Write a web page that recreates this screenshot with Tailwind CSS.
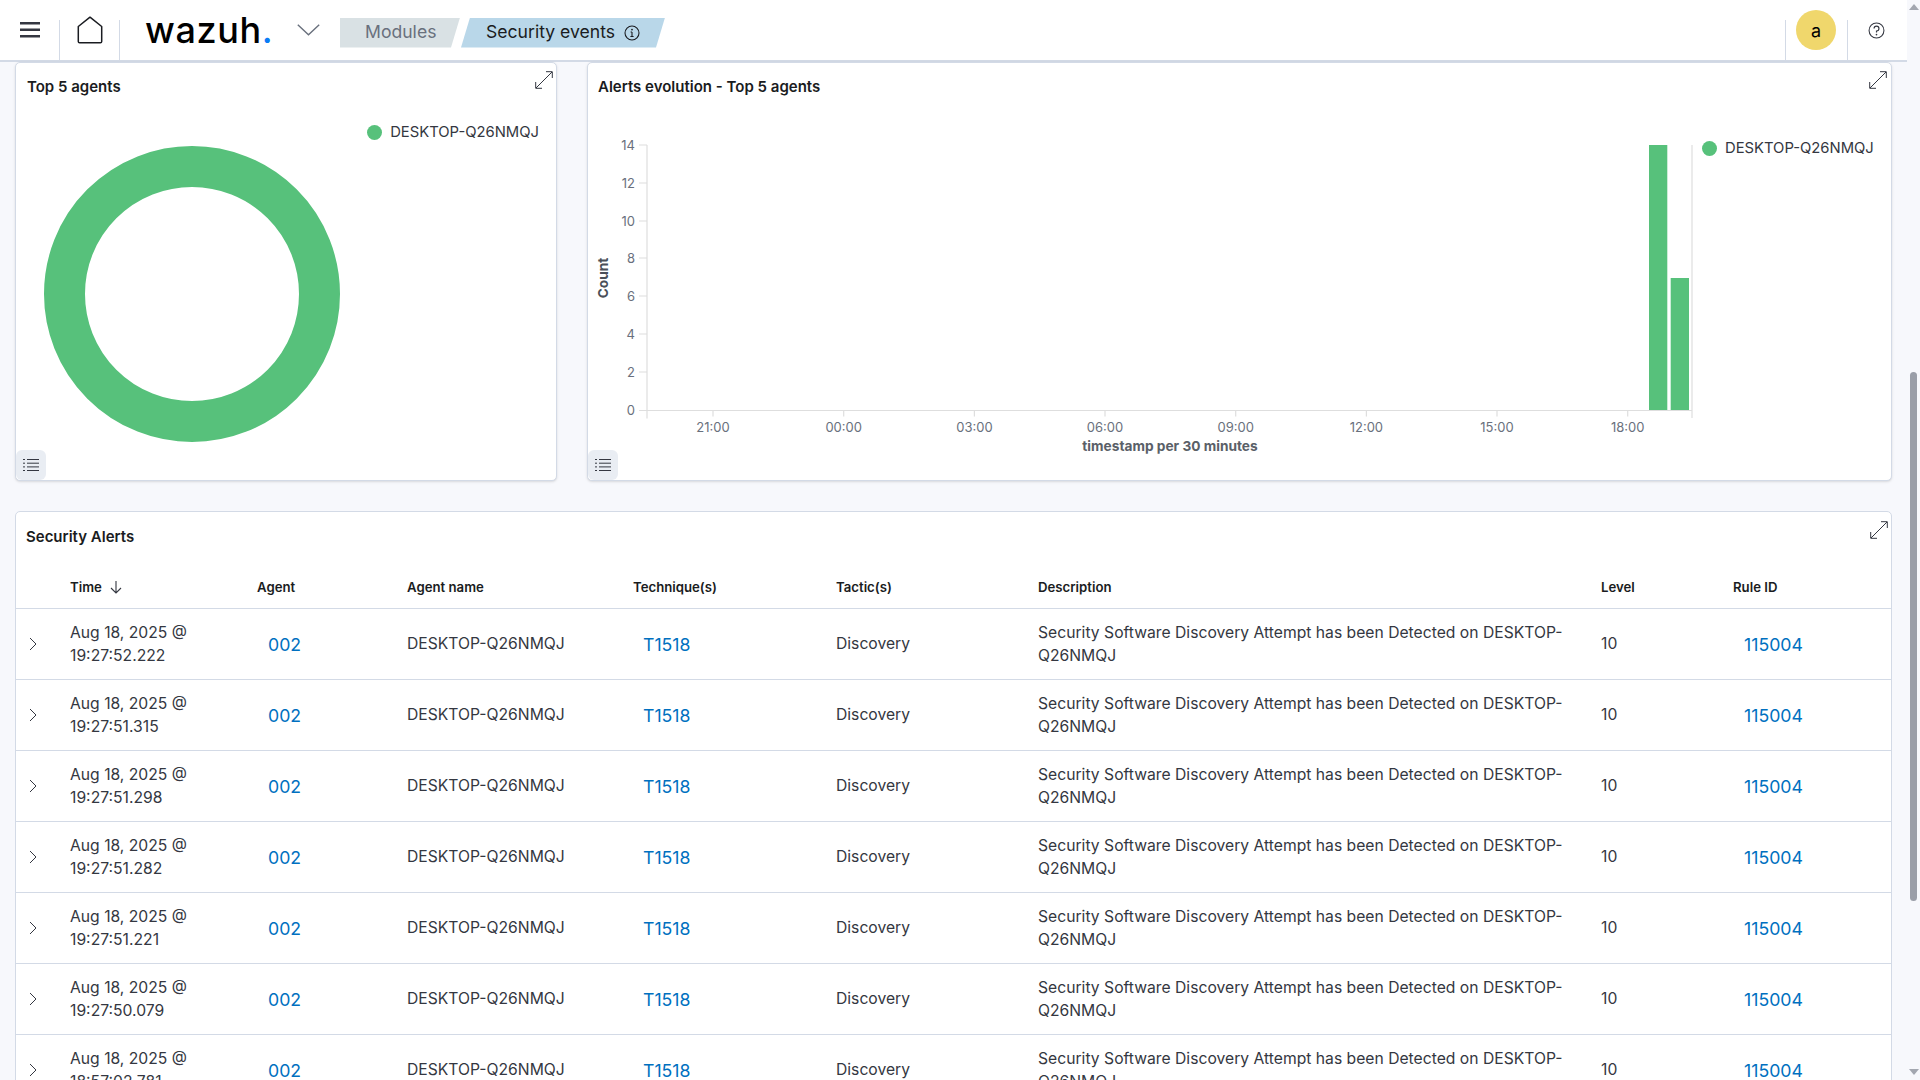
<!DOCTYPE html>
<html lang="en">
<head>
    <meta charset="UTF-8">
    <title>Wazuh - Security events</title>
    <script src="https://cdn.jsdelivr.net/npm/@tailwindcss/browser@4"></script>
</head>
<body class="flex h-screen overflow-hidden bg-[#f7f8fc] font-[Inter,sans-serif] text-[#343741]">
    <div class="w-[1907px] shrink-0">
        <!-- Header -->
        <header class="flex h-[62px] items-center border-b-2 border-[#d3dae6] bg-white">
            <div class="flex w-[59px] justify-center pl-[1px]">
                <svg width="20" height="16" viewBox="0 0 20 16"><path d="M0 1.2h20M0 7.7h20M0 14.2h20" stroke="#343741" stroke-width="2.4"/></svg>
            </div>
            <div class="h-10 w-px self-end bg-[#d3dae6]"></div>
            <div class="flex w-[59px] justify-center">
                <svg width="26" height="28" viewBox="0 0 26 28" fill="none"><path d="M13 1.2 24.7 10.5V25.4a1.3 1.3 0 0 1-1.3 1.3H2.6a1.3 1.3 0 0 1-1.3-1.3V10.5Z" stroke="#1a1c21" stroke-width="1.5" stroke-linejoin="round"/></svg>
            </div>
            <div class="h-10 w-px self-end bg-[#d3dae6]"></div>
            <div class="ml-[25px] w-[126px] text-[36px] leading-none font-medium tracking-[0.6px] text-black">wazuh<span class="text-[#0a7cf5]">.</span></div>
            <svg class="ml-[26px]" width="23" height="12" viewBox="0 0 23 12" fill="none"><path d="M.8.8 11.5 10.8 22.2.8" stroke="#69707d" stroke-width="1.4"/></svg>
            <div class="ml-[20px] mt-[5px] flex h-[30px] items-center">
                <div class="flex h-full w-[120px] items-center bg-[#d9e1e4] pl-[25px] text-[17.6px] text-[#69707d] [clip-path:polygon(0_0,100%_0,calc(100%-9px)_100%,0_100%)]">Modules</div>
                <div class="ml-px flex h-full w-[204px] items-center gap-[9px] bg-[#b9d7e9] pl-[25px] text-[17.6px] text-[#1a1c21] [clip-path:polygon(9px_0,100%_0,calc(100%-9px)_100%,0_100%)]">
                    Security events
                    <svg width="16" height="16" viewBox="0 0 16 16" fill="none"><circle cx="8" cy="8" r="7" stroke="#1a1c21" stroke-width="1.1"/><path d="M8 7v4.5M6.4 11.5h3.2M6.6 7H8" stroke="#1a1c21" stroke-width="1.1"/><circle cx="8" cy="4.6" r=".9" fill="#1a1c21"/></svg>
                </div>
            </div>
            <div class="ml-auto h-10 w-px self-end bg-[#d3dae6]"></div>
            <div class="flex w-[61px] justify-center pr-px">
                <div class="flex h-10 w-10 items-center justify-center rounded-full bg-[#f0d76c] text-[18px] text-black">a</div>
            </div>
            <div class="h-10 w-px self-end bg-[#d3dae6]"></div>
            <div class="flex w-[59px] justify-center pr-[2px]">
                <svg width="17" height="17" viewBox="0 0 16 16" fill="none"><circle cx="8" cy="8" r="7" stroke="#343741" stroke-width="1"/><path d="M5.7 6.2A2.3 2.3 0 1 1 8 8.5v1.4" stroke="#343741" stroke-width="1.1"/><circle cx="8" cy="11.8" r=".8" fill="#343741"/></svg>
            </div>
        </header>

        <main class="pl-[15px] pr-[15px]">
            <div class="grid grid-cols-[542px_1305px] gap-x-[30px]">
                <!-- Top 5 agents -->
                <section class="relative h-[419px] rounded-[5px] border border-[#d3dae6] bg-white shadow-sm">
                    <h2 class="pl-[11px] pt-[14px] text-[15px] leading-5 font-semibold text-[#1a1c21]">Top 5 agents</h2>
                    <div class="mt-[25px] flex items-center justify-end gap-[8px] pr-[17px] text-[14.8px] leading-5">
                        <span class="h-[15px] w-[15px] rounded-full bg-[#57c17b]"></span>DESKTOP-Q26NMQJ
                    </div>
                    <svg class="ml-[28px] mt-[4px]" width="296" height="296" viewBox="0 0 296 296" fill="none"><circle cx="148" cy="148" r="127.5" stroke="#57c17b" stroke-width="41"/></svg>
                    <button class="absolute left-0 bottom-0 flex h-[30px] w-[30px] items-center justify-center rounded-md bg-[#e9edf3]">
                        <svg width="16" height="14" viewBox="0 0 16 14" fill="none" stroke="#343741"><path d="M0 1.5h2M4 1.5h12M0 5.2h2M4 5.2h12M0 8.9h2M4 8.9h12M0 12.5h2M4 12.5h12"/></svg>
                    </button>
                    <svg class="absolute right-[3px] top-[8px]" width="18" height="18" viewBox="0 0 18 18" fill="none" stroke="#343741"><path d="M1 17 17 1M11 .7h6.3V7M.7 11v6.3H7"/></svg>
                </section>

                <!-- Alerts evolution -->
                <section class="relative h-[419px] rounded-[5px] border border-[#d3dae6] bg-white shadow-sm">
                    <h2 class="pl-[10px] pt-[14px] text-[15px] leading-5 font-semibold text-[#1a1c21]">Alerts evolution - Top 5 agents</h2>
                    <div class="mt-[3px] flex">
                        <svg width="1113" height="360" viewBox="588 100 1113 360" fill="none" font-size="13">
                            <path d="M647 145V410.5M639 145h8M639 183h8M639 221h8M639 258h8M639 296h8M639 334h8M639 372h8M639 410.5h8M647 410.5H1692M647 410.5v8M713 410.5v6M843.7 410.5v6M974.4 410.5v6M1105 410.5v6M1235.7 410.5v6M1366.4 410.5v6M1497 410.5v6M1627.7 410.5v6M1692 145V418" stroke="#dedede" stroke-width="1.2"/>
                            <rect x="1649" y="145" width="18.3" height="265" fill="#57c17b"/>
                            <rect x="1670.7" y="278" width="18.3" height="132" fill="#57c17b"/>
                            <g fill="#69707d" text-anchor="end">
                                <text x="635" y="149.5">14</text><text x="635" y="187.5">12</text><text x="635" y="225.5">10</text><text x="635" y="262.5">8</text><text x="635" y="300.5">6</text><text x="635" y="338.5">4</text><text x="635" y="376.5">2</text><text x="635" y="414.5">0</text>
                            </g>
                            <g fill="#69707d" text-anchor="middle">
                                <text x="713" y="432">21:00</text><text x="843.7" y="432">00:00</text><text x="974.4" y="432">03:00</text><text x="1105" y="432">06:00</text><text x="1235.7" y="432">09:00</text><text x="1366.4" y="432">12:00</text><text x="1497" y="432">15:00</text><text x="1627.7" y="432">18:00</text>
                            </g>
                            <text x="1170" y="451" fill="#5a6068" font-size="13.7" font-weight="700" text-anchor="middle">timestamp per 30 minutes</text>
                            <text transform="translate(608 278) rotate(-90)" fill="#4a4f58" font-size="13.7" font-weight="700" text-anchor="middle">Count</text>
                        </svg>
                        <div class="mt-[38px] flex h-5 items-center gap-[8px] pl-px text-[14.8px]">
                            <span class="h-[15px] w-[15px] rounded-full bg-[#57c17b]"></span>DESKTOP-Q26NMQJ
                        </div>
                    </div>
                    <button class="absolute left-0 bottom-0 flex h-[30px] w-[30px] items-center justify-center rounded-md bg-[#e9edf3]">
                        <svg width="16" height="14" viewBox="0 0 16 14" fill="none" stroke="#343741"><path d="M0 1.5h2M4 1.5h12M0 5.2h2M4 5.2h12M0 8.9h2M4 8.9h12M0 12.5h2M4 12.5h12"/></svg>
                    </button>
                    <svg class="absolute right-[4px] top-[8px]" width="18" height="18" viewBox="0 0 18 18" fill="none" stroke="#343741"><path d="M1 17 17 1M11 .7h6.3V7M.7 11v6.3H7"/></svg>
                </section>
            </div>

            <!-- Security Alerts -->
            <section class="relative mt-[30px] rounded-t-[5px] border border-[#d3dae6] bg-white">
                <h2 class="pl-[10px] pt-[15px] text-[15px] leading-5 font-semibold text-[#1a1c21]">Security Alerts</h2>
                <svg class="absolute right-[3px] top-[9px]" width="18" height="18" viewBox="0 0 18 18" fill="none" stroke="#343741"><path d="M1 17 17 1M11 .7h6.3V7M.7 11v6.3H7"/></svg>

                <div class="mt-[30px] grid h-[31px] grid-cols-[54px_187px_150px_226px_203px_202px_563px_132px_1fr] items-start text-[13.2px] leading-5 font-semibold text-[#1a1c21]">
                    <div></div>
                    <div class="flex items-center gap-[7px]">Time
                        <svg width="14" height="14" viewBox="0 0 14 14" fill="none" stroke="#343741" stroke-width="1.1"><path d="M7 1v12M2 8l5 5 5-5"/></svg>
                    </div>
                    <div>Agent</div>
                    <div>Agent name</div>
                    <div>Technique(s)</div>
                    <div>Tactic(s)</div>
                    <div>Description</div>
                    <div>Level</div>
                    <div>Rule ID</div>
                </div>

                <div class="grid h-[71px] grid-cols-[54px_187px_150px_226px_203px_202px_563px_132px_1fr] items-center border-t border-[#d3dae6] text-[15.7px] leading-[23px]">
                    <svg class="ml-[13px]" width="8" height="14" viewBox="0 0 8 14" fill="none" stroke="#343741"><path d="m1 1 6 6-6 6"/></svg>
                    <div>Aug 18, 2025 @<br>19:27:52.222</div>
                    <a class="pl-[11px] text-[17.7px] text-[#0070c0]">002</a>
                    <div class="pb-px">DESKTOP-Q26NMQJ</div>
                    <a class="pl-[10px] text-[17.7px] text-[#0070c0]">T1518</a>
                    <div class="pb-px">Discovery</div>
                    <div class="pr-[20px]">Security Software Discovery Attempt has been Detected on DESKTOP-Q26NMQJ</div>
                    <div class="pb-px">10</div>
                    <a class="pl-[11px] text-[17.7px] text-[#0070c0]">115004</a>
                </div>
                <div class="grid h-[71px] grid-cols-[54px_187px_150px_226px_203px_202px_563px_132px_1fr] items-center border-t border-[#d3dae6] text-[15.7px] leading-[23px]">
                    <svg class="ml-[13px]" width="8" height="14" viewBox="0 0 8 14" fill="none" stroke="#343741"><path d="m1 1 6 6-6 6"/></svg>
                    <div>Aug 18, 2025 @<br>19:27:51.315</div>
                    <a class="pl-[11px] text-[17.7px] text-[#0070c0]">002</a>
                    <div class="pb-px">DESKTOP-Q26NMQJ</div>
                    <a class="pl-[10px] text-[17.7px] text-[#0070c0]">T1518</a>
                    <div class="pb-px">Discovery</div>
                    <div class="pr-[20px]">Security Software Discovery Attempt has been Detected on DESKTOP-Q26NMQJ</div>
                    <div class="pb-px">10</div>
                    <a class="pl-[11px] text-[17.7px] text-[#0070c0]">115004</a>
                </div>
                <div class="grid h-[71px] grid-cols-[54px_187px_150px_226px_203px_202px_563px_132px_1fr] items-center border-t border-[#d3dae6] text-[15.7px] leading-[23px]">
                    <svg class="ml-[13px]" width="8" height="14" viewBox="0 0 8 14" fill="none" stroke="#343741"><path d="m1 1 6 6-6 6"/></svg>
                    <div>Aug 18, 2025 @<br>19:27:51.298</div>
                    <a class="pl-[11px] text-[17.7px] text-[#0070c0]">002</a>
                    <div class="pb-px">DESKTOP-Q26NMQJ</div>
                    <a class="pl-[10px] text-[17.7px] text-[#0070c0]">T1518</a>
                    <div class="pb-px">Discovery</div>
                    <div class="pr-[20px]">Security Software Discovery Attempt has been Detected on DESKTOP-Q26NMQJ</div>
                    <div class="pb-px">10</div>
                    <a class="pl-[11px] text-[17.7px] text-[#0070c0]">115004</a>
                </div>
                <div class="grid h-[71px] grid-cols-[54px_187px_150px_226px_203px_202px_563px_132px_1fr] items-center border-t border-[#d3dae6] text-[15.7px] leading-[23px]">
                    <svg class="ml-[13px]" width="8" height="14" viewBox="0 0 8 14" fill="none" stroke="#343741"><path d="m1 1 6 6-6 6"/></svg>
                    <div>Aug 18, 2025 @<br>19:27:51.282</div>
                    <a class="pl-[11px] text-[17.7px] text-[#0070c0]">002</a>
                    <div class="pb-px">DESKTOP-Q26NMQJ</div>
                    <a class="pl-[10px] text-[17.7px] text-[#0070c0]">T1518</a>
                    <div class="pb-px">Discovery</div>
                    <div class="pr-[20px]">Security Software Discovery Attempt has been Detected on DESKTOP-Q26NMQJ</div>
                    <div class="pb-px">10</div>
                    <a class="pl-[11px] text-[17.7px] text-[#0070c0]">115004</a>
                </div>
                <div class="grid h-[71px] grid-cols-[54px_187px_150px_226px_203px_202px_563px_132px_1fr] items-center border-t border-[#d3dae6] text-[15.7px] leading-[23px]">
                    <svg class="ml-[13px]" width="8" height="14" viewBox="0 0 8 14" fill="none" stroke="#343741"><path d="m1 1 6 6-6 6"/></svg>
                    <div>Aug 18, 2025 @<br>19:27:51.221</div>
                    <a class="pl-[11px] text-[17.7px] text-[#0070c0]">002</a>
                    <div class="pb-px">DESKTOP-Q26NMQJ</div>
                    <a class="pl-[10px] text-[17.7px] text-[#0070c0]">T1518</a>
                    <div class="pb-px">Discovery</div>
                    <div class="pr-[20px]">Security Software Discovery Attempt has been Detected on DESKTOP-Q26NMQJ</div>
                    <div class="pb-px">10</div>
                    <a class="pl-[11px] text-[17.7px] text-[#0070c0]">115004</a>
                </div>
                <div class="grid h-[71px] grid-cols-[54px_187px_150px_226px_203px_202px_563px_132px_1fr] items-center border-t border-[#d3dae6] text-[15.7px] leading-[23px]">
                    <svg class="ml-[13px]" width="8" height="14" viewBox="0 0 8 14" fill="none" stroke="#343741"><path d="m1 1 6 6-6 6"/></svg>
                    <div>Aug 18, 2025 @<br>19:27:50.079</div>
                    <a class="pl-[11px] text-[17.7px] text-[#0070c0]">002</a>
                    <div class="pb-px">DESKTOP-Q26NMQJ</div>
                    <a class="pl-[10px] text-[17.7px] text-[#0070c0]">T1518</a>
                    <div class="pb-px">Discovery</div>
                    <div class="pr-[20px]">Security Software Discovery Attempt has been Detected on DESKTOP-Q26NMQJ</div>
                    <div class="pb-px">10</div>
                    <a class="pl-[11px] text-[17.7px] text-[#0070c0]">115004</a>
                </div>
                <div class="grid h-[71px] grid-cols-[54px_187px_150px_226px_203px_202px_563px_132px_1fr] items-center border-t border-[#d3dae6] text-[15.7px] leading-[23px]">
                    <svg class="ml-[13px]" width="8" height="14" viewBox="0 0 8 14" fill="none" stroke="#343741"><path d="m1 1 6 6-6 6"/></svg>
                    <div>Aug 18, 2025 @<br>18:57:02.781</div>
                    <a class="pl-[11px] text-[17.7px] text-[#0070c0]">002</a>
                    <div class="pb-px">DESKTOP-Q26NMQJ</div>
                    <a class="pl-[10px] text-[17.7px] text-[#0070c0]">T1518</a>
                    <div class="pb-px">Discovery</div>
                    <div class="pr-[20px]">Security Software Discovery Attempt has been Detected on DESKTOP-Q26NMQJ</div>
                    <div class="pb-px">10</div>
                    <a class="pl-[11px] text-[17.7px] text-[#0070c0]">115004</a>
                </div>
            </section>
        </main>
    </div>

    <!-- Scrollbar -->
    <div class="flex h-screen w-[13px] flex-col items-center">
        <div class="mt-[4px] h-0 w-0 border-x-[5px] border-b-[6px] border-x-transparent border-b-[#a3a7b0]"></div>
        <div class="mt-[362px] h-[529px] w-[7px] rounded-full bg-[#9a9ea8]"></div>
        <div class="mt-[168px] h-0 w-0 border-x-[5px] border-t-[6px] border-x-transparent border-t-[#a3a7b0]"></div>
    </div>
</body>
</html>
